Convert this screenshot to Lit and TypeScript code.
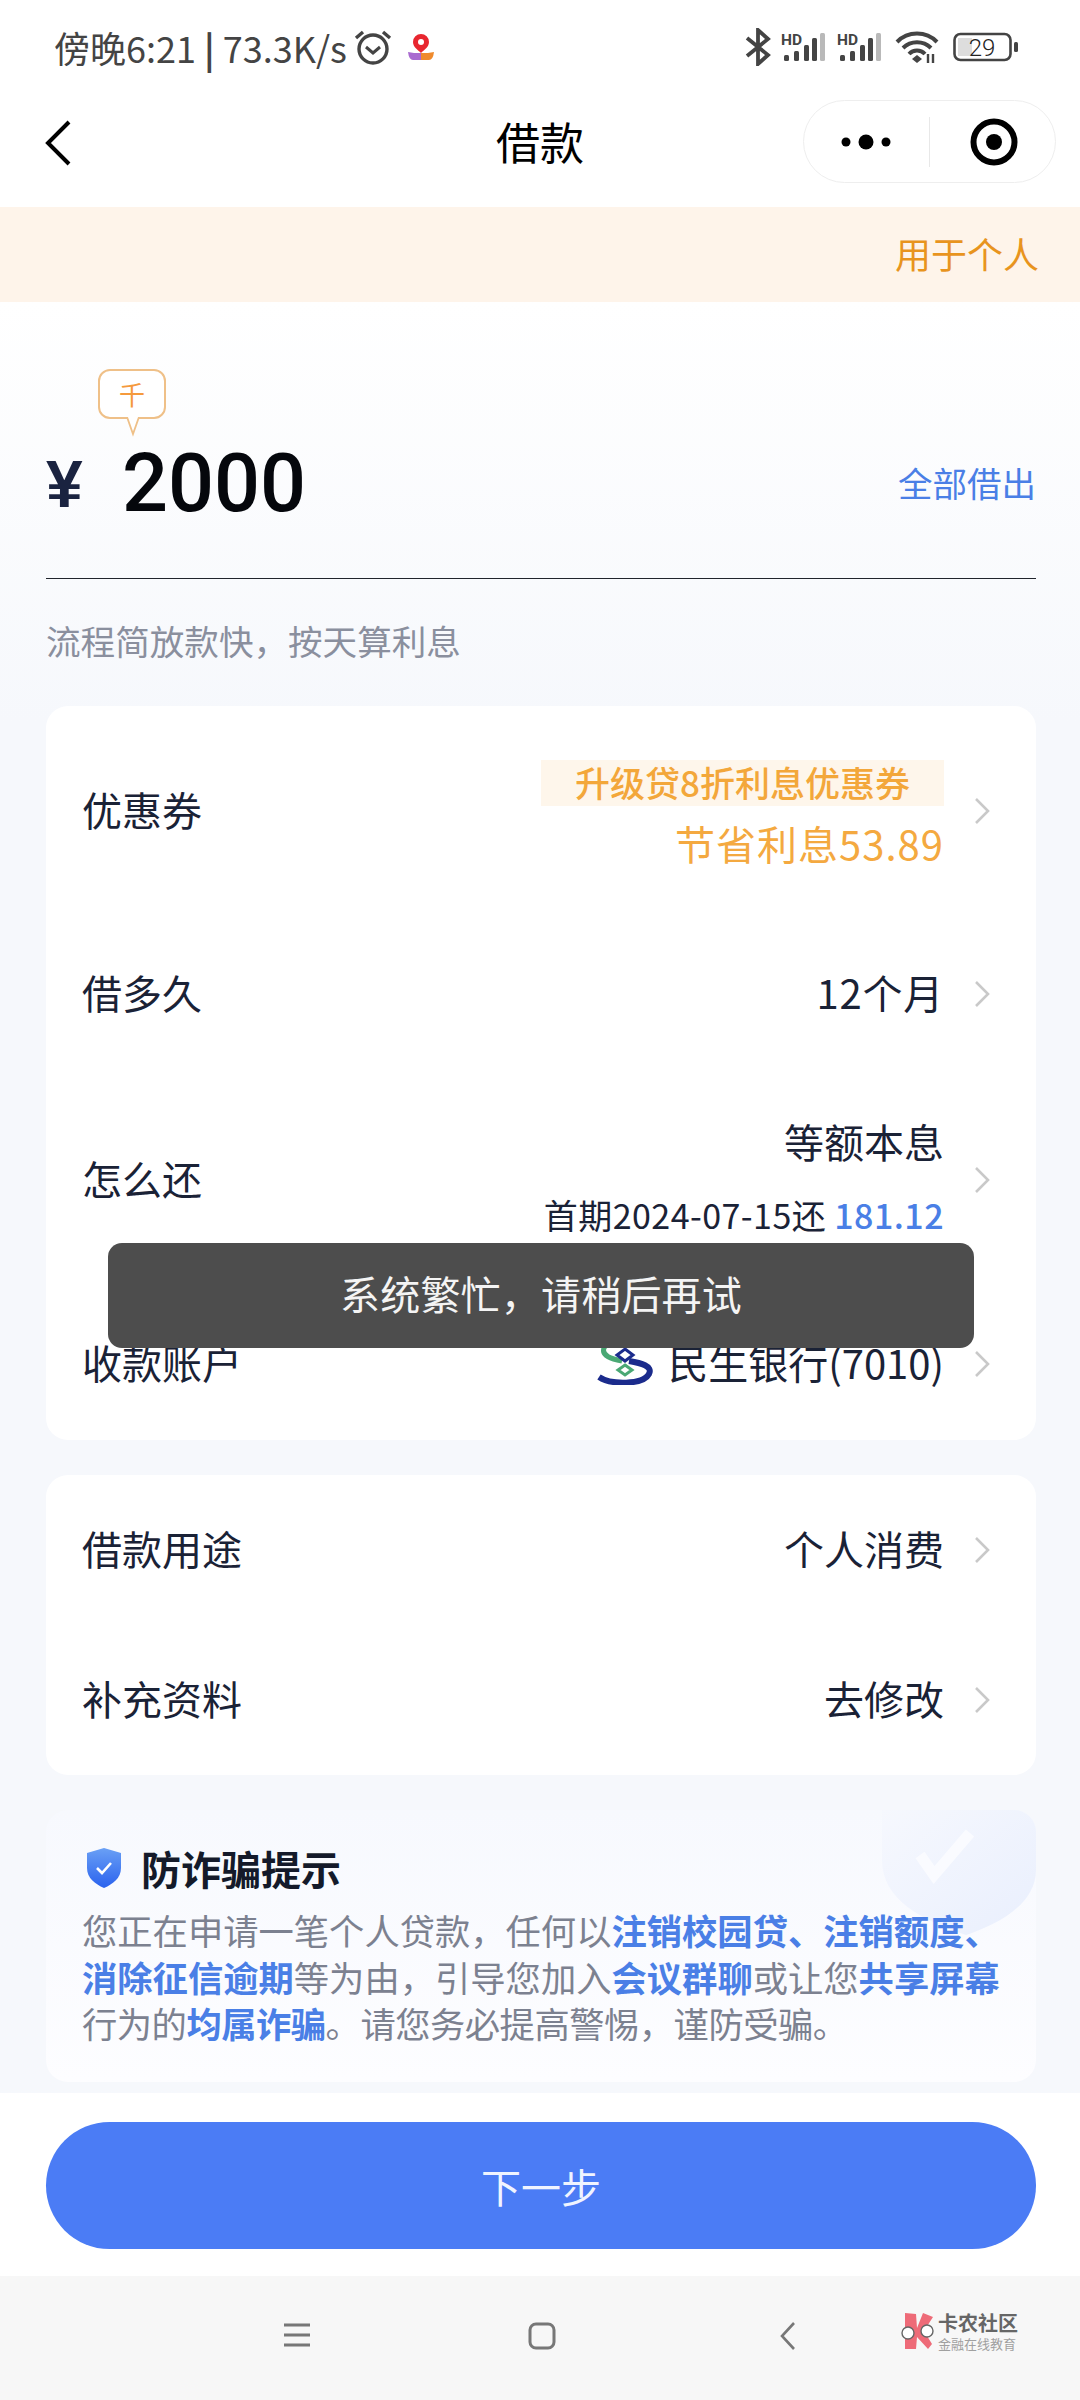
import { LitElement, html, css, svg } from "lit";
import { customElement } from "lit/decorators.js";

const chevron = html`<svg class="chev" width="16" height="28" viewBox="0 0 16 28"><path d="M2 2l12 12L2 26" fill="none" stroke="#c9c9c9" stroke-width="2.6"/></svg>`;

const signal = svg`<text x="0" y="14" font-family="Roboto" font-size="15.5" font-weight="700" fill="#444">HD</text>
<rect x="3" y="24" width="5" height="6" rx="1.5" fill="#444"/><rect x="13" y="20" width="5" height="10" rx="1.5" fill="#444"/><rect x="23" y="14" width="5" height="16" rx="1.5" fill="#444"/><rect x="39" y="2" width="5" height="28" rx="1.5" fill="#b9b9b9"/><rect x="31" y="7" width="5" height="23" rx="1.5" fill="#444"/>`;

@customElement("app-root")
export class AppRoot extends LitElement {
  static styles = css`
    :host { display: block; position: relative; width: 1080px; height: 2400px; overflow: hidden; background: #fff;
      font-family: "Noto Sans CJK SC", "Noto Sans", sans-serif; color: #1a2236; }
    .page { display: flex; flex-direction: column; height: 2400px; }
    .status { height: 90px; flex: none; display: flex; align-items: center; justify-content: space-between; padding: 3px 61px 0 54px; box-sizing: border-box; color: #444; font-size: 36px; }
    .status-l, .status-r { display: flex; align-items: center; }
    .status-l span { line-height: 1; white-space: nowrap; }
    .status-l b { font-weight: 700; }
    .nav { height: 117px; flex: none; display: flex; align-items: center; position: relative; justify-content: center; padding-bottom: 15px; box-sizing: border-box; }
    .nav h1 { margin: 0; font-size: 44px; font-weight: 400; color: #000; line-height: 1; }
    .back { position: absolute; left: 44px; top: 29px; }
    .capsule { position: absolute; left: 803px; top: 10px; width: 253px; height: 83px; box-sizing: border-box; border: 1.5px solid #eee; border-radius: 42px; display: flex; align-items: center; }
    .capsule .cell { flex: 1; display: flex; justify-content: center; align-items: center; height: 50px; }
    .capsule .cell:first-child { border-right: 1.5px solid #e8e8e8; }
    .banner { height: 95px; flex: none; background: #fef4ea; color: #e8941e; font-size: 36px; display: flex; align-items: center; justify-content: flex-end; padding-right: 41px; padding-bottom: 3px; box-sizing: border-box; }
    .main { flex: 1; min-height: 0; background: linear-gradient(#fff 0, #f6f8fc 420px); padding: 0 44px 0 46px; position: relative; }
    .hero { height: 277px; box-sizing: border-box; border-bottom: 1.5px solid #20242c; display: flex; align-items: center; justify-content: space-between; padding-top: 87px; position: relative; }
    .tip { position: absolute; left: 52px; top: 67px; width: 68px; height: 50px; box-sizing: border-box; border: 2px solid #efc088; border-radius: 12px; background: #fff; color: #f59a3c; font-size: 26px; display: flex; align-items: center; justify-content: center; line-height: 1; }
    .tail { position: absolute; left: 25px; top: 46px; }
    .amount { display: flex; align-items: center; }
    .yen { font-family: "Liberation Sans", sans-serif; font-weight: 700; font-size: 66px; color: #1a2340; width: 76px; line-height: 1; }
    .num { font-family: Roboto, sans-serif; font-weight: 500; font-size: 81px; color: #05070c; line-height: 1; }
    .all { font-size: 34.5px; color: #4a7fe6; margin-bottom: 3px; }
    .sub { margin: 0; height: 127px; box-sizing: border-box; padding-top: 36px; font-size: 34.6px; color: #8a8f9e; line-height: 50px; }
    .card { background: #fff; border-radius: 22px; margin-bottom: 35px; padding: 0 36px; }
    .row { display: flex; align-items: center; justify-content: space-between; font-size: 40px; padding-bottom: 4px; box-sizing: border-box; }
    .r-coupon { height: 210px; } .r-term { height: 156px; } .r-repay { height: 216px; } .r-acct { height: 152px; } .r-std { height: 150px; }
    .right { display: flex; align-items: center; gap: 30px; margin-right: 10px; }
    .chev { margin-top: 4px; }
    .val { display: flex; flex-direction: column; align-items: flex-end; }
    .val.term { letter-spacing: .8px; }
    .r-coupon .val { padding-top: 16px; }
    .tag { width: 403px; height: 46px; padding-bottom: 3px; box-sizing: border-box; background: #fef6eb; color: #f3a73a; font-size: 35px; font-weight: 500; display: flex; align-items: center; justify-content: center; line-height: 1; }
    .save { color: #f4a940; margin-top: 7px; margin-bottom: 2px; line-height: 60px; letter-spacing: 1px; }
    .plan { line-height: 50px; }
    .first { font-size: 34px; line-height: 50px; margin-top: 24px; letter-spacing: .45px; }
    .first b { color: #4a7fe6; font-weight: 500; }
    .val.bank { flex-direction: row; align-items: center; gap: 14px; }
    .fraud { height: 272px; box-sizing: border-box; background: linear-gradient(#f7f9fe, #fdfdff); border-radius: 22px; padding: 30px 36px 0; position: relative; overflow: hidden; }
    .fraud h2 { margin: 0; display: flex; align-items: center; gap: 19px; padding-left: 4px; font-size: 40px; font-weight: 700; line-height: 56px; color: #141a2a; position: relative; }
    .fraud p { margin: 11px 0 0; font-size: 35.3px; line-height: 46.5px; color: #7c8190; position: relative; white-space: nowrap; }
    .fraud p b { color: #4a7fe6; font-weight: 700; }
    .tight { letter-spacing: -.5px; }
    .mark { position: absolute; right: 0; top: 0; }
    .bar { height: 183px; flex: none; background: #fff; display: flex; align-items: center; padding: 2px 44px 0 46px; box-sizing: border-box; }
    .btn { flex: 1; height: 127px; border: 0; border-radius: 64px; background: #4b7cf5; color: #f0f4ff; font: inherit; font-size: 40px; }
    .sys { height: 124px; flex: none; background: #f7f7f7; position: relative; display: flex; align-items: center; }
    .sys svg { position: absolute; }
    .brand { position: absolute; left: 938px; top: 37px; width: 90px; }
    .brand div { line-height: 1; white-space: nowrap; }
    .b1 { font-size: 20px; font-weight: 700; color: #666; }
    .b2 { font-size: 13px; color: #a0a0a0; margin-top: 4px; }
    .toast { position: absolute; left: 108px; top: 1243px; width: 866px; height: 105px; padding-bottom: 5px; box-sizing: border-box; background: #4d4d4d; border-radius: 14px; color: #f4f4f4; font-size: 40px; letter-spacing: .2px; display: flex; align-items: center; justify-content: center; }
  `;

  render() {
    return html`<div class="page" lang="zh-CN">
      <div class="status">
        <div class="status-l">
          <span>傍晚6:21 <b>|</b> 73.3K/s</span>
          <svg style="margin-left:6px" width="40" height="36" viewBox="0 0 40 36"><circle cx="20" cy="20" r="14" fill="none" stroke="#444" stroke-width="3.4"/><path d="M13 18l7 6 7-6" fill="none" stroke="#444" stroke-width="3"/><path d="M3 9l7-6M37 9l-7-6" stroke="#444" stroke-width="3.4"/></svg>
          <svg style="margin-left:14px" width="28" height="28" viewBox="0 0 28 28"><path d="M14 1a8 8 0 0 1 8 8c0 5-5 8-8 11-3-3-8-6-8-11a8 8 0 0 1 8-8z" fill="#e8262f"/><circle cx="14" cy="9" r="3" fill="#fff"/><path d="M1 19l6 1h7v7H6q-4 0-5-8z" fill="#a96ad0"/><path d="M27 19l-6 1h-7v7h8q4 0 5-8z" fill="#ef8a2c"/></svg>
        </div>
        <div class="status-r">
          <svg width="26" height="38" viewBox="0 0 26 38"><path d="M2 10l21 17-10 9V2l10 9L2 28" fill="none" stroke="#444" stroke-width="3.8"/></svg>
          <svg style="margin-left:10px" width="46" height="32" viewBox="0 0 46 32">${signal}</svg>
          <svg style="margin-left:10px" width="46" height="32" viewBox="0 0 46 32">${signal}</svg>
          <svg style="margin-left:12px" width="44" height="34" viewBox="0 0 44 34"><path d="M2 12a28 28 0 0 1 40 0M8 18a20 20 0 0 1 28 0M14 24a11 11 0 0 1 16 0" fill="none" stroke="#444" stroke-width="4"/><path d="M17 29l5-4 5 4-5 4z" fill="#444"/><path d="M33 24v9M38 24v9" stroke="#444" stroke-width="2.4"/></svg>
          <svg style="margin-left:14px" width="66" height="30" viewBox="0 0 66 30"><rect x="1.5" y="2" width="56" height="26" rx="6" fill="#fff" stroke="#444" stroke-width="2.6"/><rect x="5" y="6" width="14" height="18" fill="#ddd"/><text x="29" y="23.5" text-anchor="middle" font-family="Roboto" font-weight="300" font-size="24" fill="#222">29</text><rect x="61" y="10" width="4" height="10" rx="1.5" fill="#444"/></svg>
        </div>
      </div>
      <div class="nav">
        <svg class="back" width="28" height="48" viewBox="0 0 28 48"><path d="M25 3L4 24l21 21" fill="none" stroke="#000" stroke-width="4"/></svg>
        <h1>借款</h1>
        <div class="capsule">
          <div class="cell"><svg width="60" height="20" viewBox="0 0 60 20"><circle cx="9" cy="10" r="4.5"/><circle cx="29" cy="10" r="7.5"/><circle cx="49" cy="10" r="4.5"/></svg></div>
          <div class="cell"><svg style="margin-left:2px" width="50" height="50" viewBox="0 0 50 50"><circle cx="25" cy="25" r="20.5" fill="none" stroke="#000" stroke-width="6"/><circle cx="25" cy="25" r="8"/></svg></div>
        </div>
      </div>
      <div class="banner">用于个人</div>
      <div class="main">
        <div class="hero">
          <div class="tip">千<svg class="tail" width="16" height="20" viewBox="0 0 16 20"><path d="M2 0l6 17 6-17" fill="#fff" stroke="#efc088" stroke-width="1.8"/></svg></div>
          <div class="amount"><span class="yen">¥</span><span class="num">2000</span></div>
          <div class="all">全部借出</div>
        </div>
        <p class="sub">流程简放款快，按天算利息</p>
        <div class="card">
          <div class="row r-coupon"><span>优惠券</span><div class="right"><div class="val"><div class="tag">升级贷8折利息优惠券</div><div class="save">节省利息53.89</div></div>${chevron}</div></div>
          <div class="row r-term"><span>借多久</span><div class="right"><div class="val term">12个月</div>${chevron}</div></div>
          <div class="row r-repay"><span>怎么还</span><div class="right"><div class="val"><div class="plan">等额本息</div><div class="first">首期2024-07-15还 <b>181.12</b></div></div>${chevron}</div></div>
          <div class="row r-acct"><span>收款账户</span><div class="right"><div class="val bank">
            <svg width="58" height="46" viewBox="0 0 58 46"><path d="M50 5C36-1 12-1 8 9c-3 8 8 11 18 13" fill="none" stroke="#4aa874" stroke-width="5"/><path d="M3 38c12 8 44 8 50-3 4-8-8-11-20-13" fill="none" stroke="#1b2b8c" stroke-width="6"/><path d="M29 10l8 6-8 6-8-6z" fill="none" stroke="#1b2b8c" stroke-width="3"/><path d="M29 26l7 5-7 5-7-5z" fill="none" stroke="#4aa874" stroke-width="3"/></svg>
            <span>民生银行(7010)</span></div>${chevron}</div></div>
        </div>
        <div class="card">
          <div class="row r-std"><span>借款用途</span><div class="right"><div class="val">个人消费</div>${chevron}</div></div>
          <div class="row r-std"><span>补充资料</span><div class="right"><div class="val">去修改</div>${chevron}</div></div>
        </div>
        <div class="fraud">
          <svg class="mark" width="154" height="125" viewBox="0 0 154 125"><defs><linearGradient id="mg" x1="0" y1="0" x2="1" y2="1"><stop offset="0" stop-color="#f6f8fe"/><stop offset="1" stop-color="#e9effd"/></linearGradient></defs><path d="M0 0h154v60c0 35-40 55-70 65C40 110 0 90 0 50z" fill="url(#mg)"/><path d="M38 45l14 20 36-42" fill="none" stroke="#fafbff" stroke-width="11"/></svg>
          <h2><svg width="36" height="40" viewBox="0 0 36 40"><defs><linearGradient id="sg" x1="0" y1="0" x2="0" y2="1"><stop offset="0" stop-color="#6aa0f5"/><stop offset="1" stop-color="#2a62ee"/></linearGradient></defs><path d="M18 0l17 5v15c0 10-8 16-17 20C9 36 1 30 1 20V5z" fill="url(#sg)"/><path d="M11 20l5 5 9-10" fill="none" stroke="#fff" stroke-width="2.6"/></svg>防诈骗提示</h2>
          <p>您正在申请一笔个人贷款，任何以<b>注销校园贷、注销额度、</b><br><b>消除征信逾期</b>等为由，引导您加入<b>会议群聊</b>或让您<b>共享屏幕</b><br><span class="tight">行为的<b>均属诈骗</b>。请您务必提高警惕，谨防受骗。</span></p>
        </div>
      </div>
      <div class="bar"><button class="btn">下一步</button></div>
      <div class="sys">
        <svg style="left:283px;top:47px" width="28" height="24" viewBox="0 0 28 24"><path d="M1 2h26M1 12h26M1 22h26" stroke="#777" stroke-width="3"/></svg>
        <svg style="left:528px;top:46px" width="28" height="28" viewBox="0 0 28 28"><rect x="2" y="2" width="24" height="24" rx="6" fill="none" stroke="#777" stroke-width="3"/></svg>
        <svg style="left:780px;top:46px" width="16" height="28" viewBox="0 0 16 28"><path d="M14 1L2 14l12 13" fill="none" stroke="#777" stroke-width="2.6"/></svg>
        <svg style="left:900px;top:36px" width="36" height="38" viewBox="0 0 36 38"><path d="M5 1l11 1 1 14 6-15 10 4-9 14 8 13-4 5-11-12-1 12H5z" fill="#ee6b78"/><circle cx="8" cy="21" r="6" fill="#fff" stroke="#666" stroke-width="1.4"/><circle cx="27" cy="19" r="6" fill="#fff" stroke="#666" stroke-width="1.4"/></svg>
        <div class="brand"><div class="b1">卡农社区</div><div class="b2">金融在线教育</div></div>
      </div>
      <div class="toast">系统繁忙，请稍后再试</div>
    </div>`;
  }
}
